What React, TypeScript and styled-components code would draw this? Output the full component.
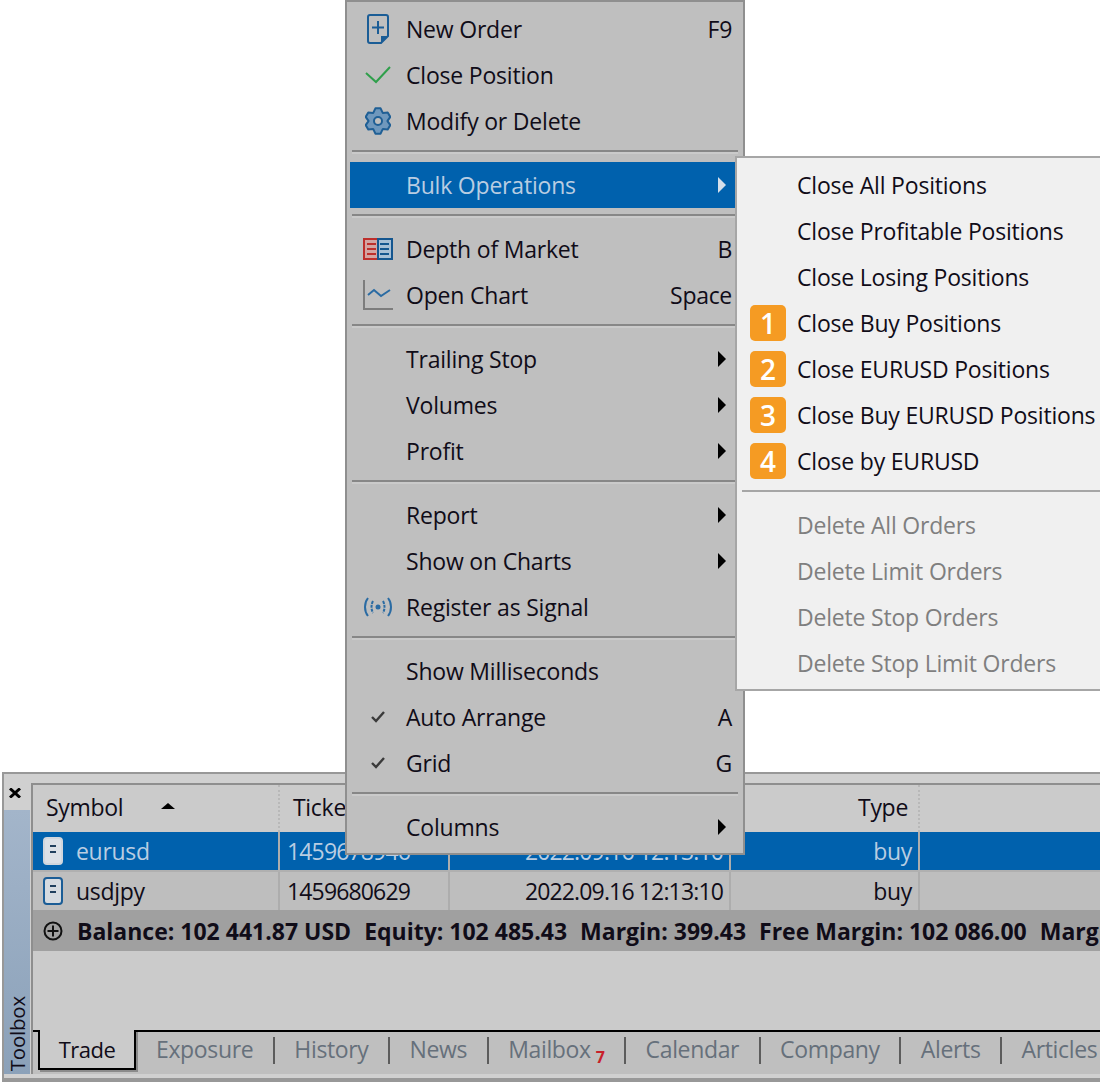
import React from 'react';
import styled, { createGlobalStyle } from 'styled-components';

const GlobalStyle = createGlobalStyle`
  html, body {
    margin: 0;
    padding: 0;
    background: #fff;
  }
  body {
    font-family: "Open Sans", "Noto Sans", "Liberation Sans", sans-serif;
    font-size: 23px;
    color: #100c18;
  }
`;

const Screen = styled.div`
  position: relative;
  width: 1100px;
  height: 1082px;
  overflow: hidden;
  box-sizing: border-box;
  padding: 772px 0 0 2px;
  display: flex;
`;

/* ---------- context menus ---------- */

const MainMenu = styled.div`
  position: absolute;
  left: 345px;
  top: 0;
  width: 400px;
  height: 855px;
  box-sizing: border-box;
  padding: 4px 3px 0;
  background: #bfbfbf;
  border: 2px solid #8f8f8f;
  z-index: 2;
`;

const SubMenu = styled.div`
  position: absolute;
  left: 735px;
  top: 156px;
  width: 420px;
  height: 535px;
  box-sizing: border-box;
  padding: 4px 0 0;
  background: #f0f0f0;
  border: 2px solid #a6a6a6;
  z-index: 3;
`;

const Item = styled.div<{ $active?: boolean }>`
  display: flex;
  align-items: center;
  height: 46px;
  padding-right: 8px;
  background: ${(p) => (p.$active ? '#0061ad' : 'transparent')};
  color: ${(p) => (p.$active ? '#b9cde2' : 'inherit')};
`;

const IconSlot = styled.span`
  flex: none;
  width: 57px;
  box-sizing: border-box;
  padding-right: 1px;
  margin-right: -1px;
  display: flex;
  align-items: center;
  justify-content: center;
`;

const Label = styled.span`
  flex: 1;
  white-space: nowrap;
  letter-spacing: -0.2px;
`;

const Shortcut = styled.span`
  letter-spacing: -0.3px;
`;

const Arrow = styled.span<{ $light?: boolean }>`
  width: 0;
  height: 0;
  margin-right: 6px;
  border-style: solid;
  border-width: 8px 0 8px 8px;
  border-color: transparent transparent transparent ${(p) => (p.$light ? '#d5dfea' : '#000')};
`;

const Separator = styled.div`
  height: 18px;
  margin: 0 2px;
  box-sizing: border-box;
  padding-top: 6px;

  &::after {
    content: '';
    display: block;
    height: 2px;
    background: #878787;
    border-bottom: 2px solid #cacaca;
  }
`;

const SubItem = styled.div<{ $disabled?: boolean }>`
  display: flex;
  align-items: center;
  height: 46px;
  color: ${(p) => (p.$disabled ? '#7f7f7f' : 'inherit')};
`;

const BadgeSlot = styled.span`
  flex: none;
  width: 60px;
  box-sizing: border-box;
  padding-left: 13px;
`;

const Badge = styled.span`
  display: flex;
  align-items: center;
  justify-content: center;
  width: 36px;
  height: 36px;
  border-radius: 5px;
  background: #f59b23;
  color: #fff;
  font-size: 28px;
  font-weight: 600;
`;

const SubSeparator = styled.div`
  height: 18px;
  margin-left: 5px;
  box-sizing: border-box;
  padding-top: 6px;

  &::after {
    content: '';
    display: block;
    height: 2px;
    background: #a6a6a6;
  }
`;

/* ---------- toolbox ---------- */

const Toolbox = styled.div`
  flex: 1;
  min-width: 0;
  display: flex;
  box-sizing: border-box;
  background: #d0d0d0;
  border-top: 2px solid #989898;
  border-left: 2px solid #989898;
  border-bottom: 4px solid #989898;
  padding-bottom: 4px;
`;

const Rail = styled.div`
  flex: none;
  width: 27px;
  display: flex;
  flex-direction: column;
`;

const CloseBox = styled.div`
  display: flex;
  align-items: flex-start;
  height: 36px;
  padding: 14px 0 0 5px;
  box-sizing: border-box;
`;

const RailBar = styled.div`
  flex: 1;
  width: 26px;
  display: flex;
  align-items: flex-end;
  justify-content: center;
  padding-bottom: 3px;
  box-sizing: border-box;
  background: linear-gradient(#a3b5ca, #8ba1b9);
`;

const RailTitle = styled.span`
  writing-mode: vertical-rl;
  transform: rotate(180deg);
  font-size: 20.5px;
  line-height: 26px;
  letter-spacing: -0.2px;
`;

const Panel = styled.div`
  flex: 1;
  min-width: 0;
  margin-top: 9px;
  display: flex;
  flex-direction: column;
  border-top: 2px solid #8e8e8e;
  border-left: 2px solid #8e8e8e;
  background: #cbcbcb;
`;

type Tone = 'head' | 'selected' | 'plain';

const GridRow = styled.div<{ $tone: Tone }>`
  flex: none;
  display: grid;
  grid-template-columns: 247px 170px 281px 189px 1fr;
  height: ${(p) => (p.$tone === 'head' ? 47 : p.$tone === 'selected' ? 40 : 38)}px;
  background: ${(p) => (p.$tone === 'head' ? '#cbcbcb' : p.$tone === 'selected' ? '#0061ad' : '#bebebe')};
  color: ${(p) => (p.$tone === 'selected' ? '#b9cde2' : 'inherit')};
  border-bottom: ${(p) => (p.$tone === 'selected' ? '2px solid #b0b0b0' : 'none')};
  box-sizing: border-box;
`;

const Cell = styled.div<{ $tone: Tone; $right?: boolean; $pad?: number; $digits?: boolean }>`
  display: flex;
  align-items: center;
  justify-content: ${(p) => (p.$right ? 'flex-end' : 'flex-start')};
  box-sizing: border-box;
  padding: 0 ${(p) => (p.$tone === 'head' ? 10 : 6)}px ${(p) => (p.$tone === 'head' ? 3 : 0)}px ${(p) => p.$pad ?? 5}px;
  border-right: 2px ${(p) => (p.$tone === 'head' ? 'dotted #b8b8b8' : 'solid #adadad')};
  white-space: nowrap;
  overflow: hidden;
  letter-spacing: ${(p) => (p.$digits ? -0.85 : -0.3)}px;

  &:last-child {
    border-right: none;
  }
`;

const SortMark = styled.span`
  width: 0;
  height: 0;
  margin-left: 38px;
  margin-bottom: 3px;
  border-style: solid;
  border-width: 0 7px 6px 7px;
  border-color: transparent transparent #000 transparent;
`;

const SymbolIcon = styled.span`
  display: flex;
  margin-right: 13px;
`;

const BalanceBar = styled.div`
  flex: none;
  height: 41px;
  display: flex;
  align-items: center;
  gap: 13px;
  box-sizing: border-box;
  padding-left: 10px;
  background: #a0a0a0;
  font-weight: 700;
  font-size: 23px;
  white-space: nowrap;
`;

const BalanceIcon = styled.span`
  flex: none;
  display: flex;
  width: 21px;
`;

const BalanceValue = styled.span`
  flex: none;
`;

const EmptyArea = styled.div`
  flex: 1;
`;

const TabStrip = styled.div`
  flex: none;
  height: 44px;
  display: flex;
  align-items: flex-start;
  box-sizing: border-box;
  border-top: 2px solid #000;
  background: #bfbfbf;
  padding-left: 5px;
  white-space: nowrap;
`;

const ActiveTab = styled.div`
  flex: none;
  width: 98px;
  height: 40px;
  margin-top: -2px;
  box-sizing: border-box;
  display: flex;
  align-items: center;
  justify-content: center;
  background: #cbcbcb;
  border: 2px solid #000;
  border-top: none;
  box-shadow: 2px 2px 0 #8a8a8a;
  font-size: 22px;
  letter-spacing: -0.5px;
`;

const TabList = styled.div`
  display: flex;
  align-items: center;
  gap: 19.5px;
  height: 34px;
  margin-left: 20px;
  color: #66707b;
  letter-spacing: -0.35px;
`;

const TabDivider = styled.span`
  width: 2px;
  height: 27px;
  margin-top: 3px;
  background: #5c5c5c;
`;

const Count = styled.span`
  align-self: flex-end;
  margin-left: 5px;
  color: #c8202a;
  font-size: 16px;
  font-weight: 700;
  line-height: 1;
`;

const TabName = styled.span`
  display: flex;
  align-items: center;
`;

/* ---------- icons ---------- */

const NewOrderIcon = () => (
  <svg width="22" height="30" viewBox="0 0 22 30" fill="none">
    <path d="M3 1h16a2 2 0 0 1 2 2v19l-7 7H3a2 2 0 0 1-2-2V3a2 2 0 0 1 2-2z" stroke="#1b5d96" strokeWidth="2" />
    <path d="M21 22h-7v7z" fill="#1b5d96" />
    <path d="M11 7v13M5 13.5h12" stroke="#1b5d96" strokeWidth="2" />
  </svg>
);

const GreenCheck = () => (
  <svg width="26" height="18" viewBox="0 0 26 18" fill="none">
    <path d="M1 7l10 9L25 1" stroke="#2f9f4b" strokeWidth="2" />
  </svg>
);

const gearPoints = (() => {
  const pts: string[] = [];
  for (let i = 0; i < 6; i += 1) {
    const a = (Math.PI / 3) * i - Math.PI / 2;
    const at = (r: number, d: number) =>
      `${(13 + r * Math.cos(a + d)).toFixed(1)},${(14 + r * Math.sin(a + d)).toFixed(1)}`;
    pts.push(at(9.5, -0.5), at(13, -0.2), at(13, 0.2), at(9.5, 0.5));
  }
  return pts.join(' ');
})();

const GearIcon = () => (
  <svg width="26" height="28" viewBox="0 0 26 28" fill="none">
    <polygon points={gearPoints} fill="#6f98bd" stroke="#1f5f95" strokeWidth="2" strokeLinejoin="round" />
    <circle cx="13" cy="14" r="4" fill="#bfbfbf" stroke="#1f5f95" strokeWidth="2" />
  </svg>
);

const DepthIcon = () => (
  <svg width="30" height="22" viewBox="0 0 30 22" fill="none">
    <path d="M15 1H1v20h14z" fill="#d4a5a2" stroke="#bd2f2c" strokeWidth="2" />
    <path d="M15 1h14v20H15z" fill="#a8c0d6" stroke="#14568f" strokeWidth="2" />
    <path d="M4 6h9M4 11h9M4 16h9" stroke="#bd2f2c" strokeWidth="2" />
    <path d="M17 6h9M17 11h9M17 16h9" stroke="#14568f" strokeWidth="2" />
  </svg>
);

const ChartIcon = () => (
  <svg width="30" height="30" viewBox="0 0 30 30" fill="none">
    <path d="M1 0v29h29" stroke="#7d7d7d" strokeWidth="2" />
    <path d="M5 15l6-5 7 6 9-6" stroke="#2a6ba3" strokeWidth="2" />
  </svg>
);

const SignalIcon = () => (
  <svg width="30" height="20" viewBox="0 0 30 20" fill="none" stroke="#2a6ba3" strokeWidth="2">
    <path d="M5 1C1 6 1 14 5 19M25 1c4 5 4 13 0 18" />
    <path d="M10 4C8 8 8 12 10 16M20 4c2 4 2 8 0 12" strokeDasharray="3 1" />
    <circle cx="15" cy="10" r="2.5" fill="#2a6ba3" stroke="none" />
  </svg>
);

const SmallCheck = () => (
  <svg width="14" height="12" viewBox="0 0 14 12" fill="none">
    <path d="M1 6l4 4 8-9" stroke="#3a3a3a" strokeWidth="2.4" />
  </svg>
);

const CloseMark = () => (
  <svg width="12" height="10" viewBox="0 0 12 10" fill="none">
    <path d="M1 0.5l10 9M11 0.5l-10 9" stroke="#000" strokeWidth="3" />
  </svg>
);

const DocIcon: React.FC<{ selected?: boolean }> = ({ selected }) => (
  <svg width="20" height="28" viewBox="0 0 20 28" fill="none">
    <rect
      x="1"
      y="1"
      width="18"
      height="26"
      rx="3"
      fill={selected ? '#dbe0e6' : '#d6dbe0'}
      stroke={selected ? '#d0d6dd' : '#1b5d96'}
      strokeWidth="2"
    />
    <path d="M7 9h6M7 15h6" stroke="#20405e" strokeWidth="2" />
  </svg>
);

const PlusCircle = () => (
  <svg width="20" height="20" viewBox="0 0 20 20" fill="none" stroke="#111" strokeWidth="2">
    <circle cx="10" cy="10" r="8.5" />
    <path d="M10 4.5v11M4.5 10h11" />
  </svg>
);

/* ---------- data ---------- */

type MenuEntry = { label: string; icon?: React.ReactNode; key?: string; more?: boolean; active?: boolean } | 'sep';

const menuEntries: MenuEntry[] = [
  { label: 'New Order', icon: <NewOrderIcon />, key: 'F9' },
  { label: 'Close Position', icon: <GreenCheck /> },
  { label: 'Modify or Delete', icon: <GearIcon /> },
  'sep',
  { label: 'Bulk Operations', more: true, active: true },
  'sep',
  { label: 'Depth of Market', icon: <DepthIcon />, key: 'B' },
  { label: 'Open Chart', icon: <ChartIcon />, key: 'Space' },
  'sep',
  { label: 'Trailing Stop', more: true },
  { label: 'Volumes', more: true },
  { label: 'Profit', more: true },
  'sep',
  { label: 'Report', more: true },
  { label: 'Show on Charts', more: true },
  { label: 'Register as Signal', icon: <SignalIcon /> },
  'sep',
  { label: 'Show Milliseconds' },
  { label: 'Auto Arrange', icon: <SmallCheck />, key: 'A' },
  { label: 'Grid', icon: <SmallCheck />, key: 'G' },
  'sep',
  { label: 'Columns', more: true },
];

const closeItems = [
  { label: 'Close All Positions' },
  { label: 'Close Profitable Positions' },
  { label: 'Close Losing Positions' },
  { label: 'Close Buy Positions', badge: '1' },
  { label: 'Close EURUSD Positions', badge: '2' },
  { label: 'Close Buy EURUSD Positions', badge: '3' },
  { label: 'Close by EURUSD', badge: '4' },
];

const deleteItems = ['Delete All Orders', 'Delete Limit Orders', 'Delete Stop Orders', 'Delete Stop Limit Orders'];

const tabs = ['Exposure', 'History', 'News', 'Mailbox', 'Calendar', 'Company', 'Alerts', 'Articles'];

const App: React.FC = () => {
  return (
    <Screen>
      <GlobalStyle />

      <Toolbox>
        <Rail>
          <CloseBox>
            <CloseMark />
          </CloseBox>
          <RailBar>
            <RailTitle>Toolbox</RailTitle>
          </RailBar>
        </Rail>

        <Panel>
          <GridRow $tone="head">
            <Cell $tone="head" $pad={13}>
              Symbol
              <SortMark />
            </Cell>
            <Cell $tone="head" $pad={13}>Ticket</Cell>
            <Cell $tone="head" />
            <Cell $tone="head" $right>Type</Cell>
            <Cell $tone="head" />
          </GridRow>
          <GridRow $tone="selected">
            <Cell $tone="selected" $pad={10}>
              <SymbolIcon><DocIcon selected /></SymbolIcon>
              eurusd
            </Cell>
            <Cell $tone="selected" $pad={7} $digits>1459678946</Cell>
            <Cell $tone="selected" $right $digits>2022.09.16 12:13:10</Cell>
            <Cell $tone="selected" $right>buy</Cell>
            <Cell $tone="selected" />
          </GridRow>
          <GridRow $tone="plain">
            <Cell $tone="plain" $pad={10}>
              <SymbolIcon><DocIcon /></SymbolIcon>
              usdjpy
            </Cell>
            <Cell $tone="plain" $pad={7} $digits>1459680629</Cell>
            <Cell $tone="plain" $right $digits>2022.09.16 12:13:10</Cell>
            <Cell $tone="plain" $right>buy</Cell>
            <Cell $tone="plain" />
          </GridRow>
          <BalanceBar>
            <BalanceIcon><PlusCircle /></BalanceIcon>
            <BalanceValue>Balance: 102 441.87 USD</BalanceValue>
            <BalanceValue>Equity: 102 485.43</BalanceValue>
            <BalanceValue>Margin: 399.43</BalanceValue>
            <BalanceValue>Free Margin: 102 086.00</BalanceValue>
            <BalanceValue>Margin Level: 25 647.15%</BalanceValue>
          </BalanceBar>
          <EmptyArea />
          <TabStrip>
            <ActiveTab>Trade</ActiveTab>
            <TabList>
              {tabs.map((name, i) => (
                <React.Fragment key={name}>
                  {i > 0 && <TabDivider />}
                  <TabName>
                    {name}
                    {name === 'Mailbox' && <Count>7</Count>}
                  </TabName>
                </React.Fragment>
              ))}
            </TabList>
          </TabStrip>
        </Panel>
      </Toolbox>

      <MainMenu>
        {menuEntries.map((entry, i) =>
          entry === 'sep' ? (
            <Separator key={i} />
          ) : (
            <Item key={entry.label} $active={entry.active}>
              <IconSlot>{entry.icon}</IconSlot>
              <Label>{entry.label}</Label>
              {entry.key && <Shortcut>{entry.key}</Shortcut>}
              {entry.more && <Arrow $light={entry.active} />}
            </Item>
          ),
        )}
      </MainMenu>

      <SubMenu>
        {closeItems.map((item) => (
          <SubItem key={item.label}>
            <BadgeSlot>{item.badge && <Badge>{item.badge}</Badge>}</BadgeSlot>
            <Label>{item.label}</Label>
          </SubItem>
        ))}
        <SubSeparator />
        {deleteItems.map((label) => (
          <SubItem key={label} $disabled>
            <BadgeSlot />
            <Label>{label}</Label>
          </SubItem>
        ))}
      </SubMenu>
    </Screen>
  );
};

export default App;
